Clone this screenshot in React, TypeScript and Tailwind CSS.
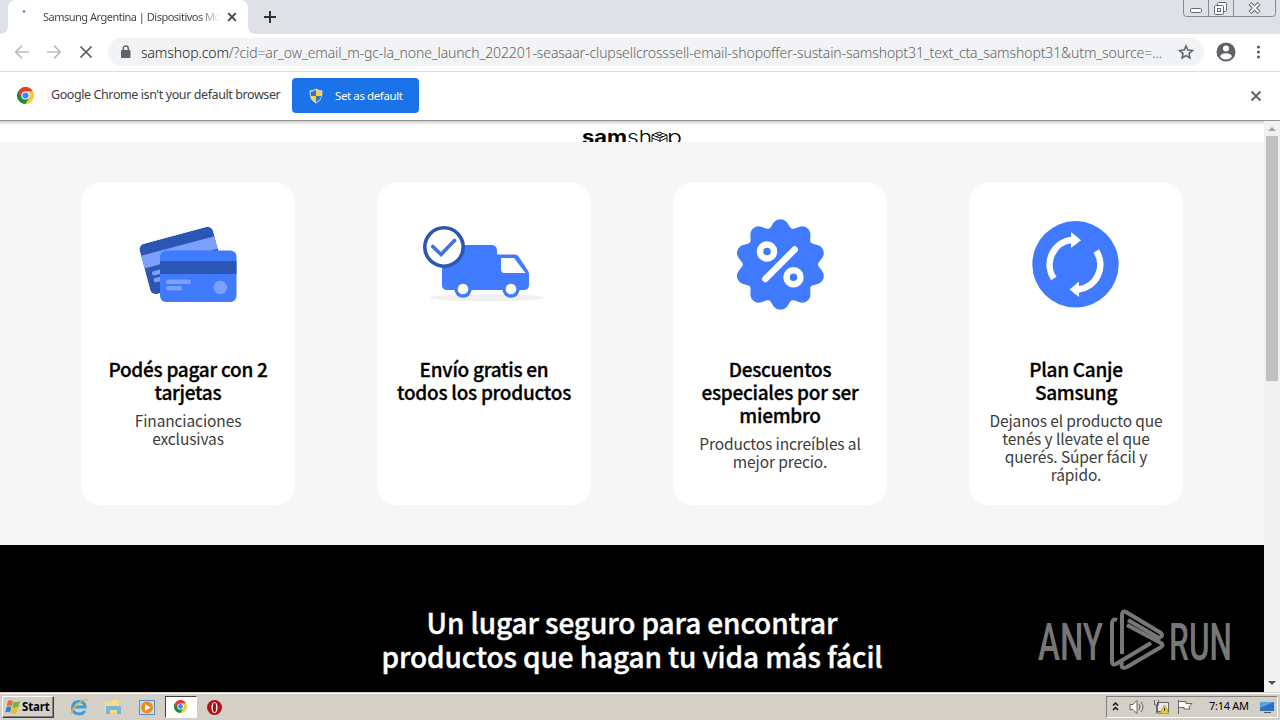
import React from 'react';

interface Feature {
  id: string;
  icon: React.ReactNode;
  title: string[];
  text: string[];
}

const CardsIcon = () => (
  <svg width="214" height="120" viewBox="0 0 214 120">
    <clipPath id="backCard"><rect width="76" height="52" rx="6" /></clipPath>
    <g transform="translate(57.2 63.2) rotate(-15)">
      <g clipPath="url(#backCard)">
        <rect width="76" height="52" fill="#2b56b4" />
        <rect y="11" width="76" height="13" fill="#7da0ff" />
        <rect x="6" y="29" width="24" height="4.500" rx="2" fill="#7da0ff" />
        <rect x="6" y="36" width="16" height="4.500" rx="2" fill="#7da0ff" />
      </g>
    </g>
    <rect x="79" y="68.500" width="76.500" height="51.500" rx="6" fill="#407bff" />
    <rect x="79" y="79" width="76.500" height="13" fill="#2b56b4" />
    <rect x="85" y="97.500" width="25" height="4.500" rx="2" fill="#7da0ff" />
    <rect x="85" y="104" width="16" height="4.500" rx="2" fill="#7da0ff" />
    <circle cx="139.3" cy="105.5" r="6.8" fill="#7da0ff" />
  </svg>
);

const TruckIcon = () => (
  <svg width="214" height="120" viewBox="0 0 214 120">
    <ellipse cx="110" cy="115.7" rx="57" ry="3.6" fill="#f0f0f0" />
    <path d="M65 63H115a5 5 0 0 1 5 5V72.5H138q2 0 3.2 1.6L150.5 88q1.5 2 1.5 4.5V103q0 5-5 5H70q-5 0-5-5Z" fill="#407bff" />
    <path d="M124 76H137L148.500 91H127.500Q124 91 124 87.500Z" fill="#fff" />
    <circle cx="86" cy="107" r="8.700" fill="#407bff" />
    <circle cx="86" cy="107" r="5.300" fill="#fff" />
    <circle cx="134" cy="107" r="8.700" fill="#407bff" />
    <circle cx="134" cy="107" r="5.300" fill="#fff" />
    <circle cx="67" cy="65" r="19.200" fill="#fff" stroke="#2b56b4" strokeWidth="3.600" />
    <path d="M55.800 64.500L64 72.500L77.500 58.500" fill="none" stroke="#4470e6" strokeWidth="3.600" strokeLinecap="round" />
  </svg>
);

// ten soft lobes around the centre of the badge
const badgePoints = Array.from({ length: 240 }, (_, i) => {
  const angle = (i / 240) * Math.PI * 2;
  const wave = Math.cos(angle * 10);
  const r = 41.9 + 3.8 * wave - 0.5 * Math.cos(angle * 20);
  return `${(107.4 + r * Math.sin(angle)).toFixed(2)},${(82.5 - r * Math.cos(angle)).toFixed(2)}`;
}).join(' ');

const PercentIcon = () => (
  <svg width="214" height="130" viewBox="0 0 214 130">
    <polygon points={badgePoints} fill="#407bff" />
    <circle cx="94" cy="69.500" r="7" fill="none" stroke="#fff" strokeWidth="6.500" />
    <circle cx="120.500" cy="95.200" r="7" fill="none" stroke="#fff" strokeWidth="6.500" />
    <path d="M92.300 97L121.700 67.500" stroke="#fff" strokeWidth="6.500" strokeLinecap="round" />
  </svg>
);

const SwapIcon = () => (
  <svg width="214" height="130" viewBox="0 0 214 130">
    <circle cx="106.500" cy="82.300" r="43.200" fill="#407bff" />
    <g fill="none" stroke="#fff" strokeWidth="6.500">
      <path d="M84.800 96.500A25 25 0 0 1 103 57.800" />
      <path d="M127.200 69A25 25 0 0 1 109.500 107.500" />
    </g>
    <path d="M102 50L112 58.300L102 66Z" fill="#fff" />
    <path d="M110 99.500L100.500 107.500L110 115Z" fill="#fff" />
  </svg>
);

const features: Feature[] = [
  { id: 'cards', icon: <CardsIcon />, title: ['Podés pagar con 2', 'tarjetas'], text: ['Financiaciones', 'exclusivas'] },
  { id: 'shipping', icon: <TruckIcon />, title: ['Envío gratis en', 'todos los productos'], text: [] },
  { id: 'discount', icon: <PercentIcon />, title: ['Descuentos', 'especiales por ser', 'miembro'], text: ['Productos increíbles al', 'mejor precio.'] },
  {
    id: 'swap',
    icon: <SwapIcon />,
    title: ['Plan Canje', 'Samsung'],
    text: ['Dejanos el producto que', 'tenés y llevate el que', 'querés. Súper fácil y', 'rápido.'],
  },
];

const ChromeLogo = ({ size }: { size: number }) => (
  <svg width={size} height={size} viewBox="0 0 48 48" className="shrink-0">
    <path d="M24 24L3.200 12A24 24 0 0 1 44.800 12Z" fill="#e33b2e" />
    <path d="M24 24L44.800 12A24 24 0 0 1 24 48Z" fill="#fcc934" />
    <path d="M24 24L24 48A24 24 0 0 1 3.200 12Z" fill="#1e8e3e" />
    <path d="M24 12H44.800L34.400 30Z" fill="#fcc934" />
    <path d="M34.400 30L24 48L13.600 30Z" fill="#1e8e3e" />
    <path d="M3.200 12L13.600 30L24 12Z" fill="#e33b2e" />
    <circle cx="24" cy="24" r="11.500" fill="#fff" />
    <circle cx="24" cy="24" r="8.800" fill="#4285f4" />
  </svg>
);

const ShieldIcon = () => (
  <svg width="14" height="16" viewBox="0 0 14 16">
    <path d="M7 .5Q10 2.500 13.500 2.500Q14 12 7 15.500Q0 12 .5 2.500Q4 2.500 7 .5Z" fill="#d5dbe4" />
    <path d="M7 2Q4 3.600 1.700 3.700L1.700 8H7Z" fill="#3273c9" />
    <path d="M7 2Q10 3.600 12.300 3.700L12.300 8H7Z" fill="#f8d436" />
    <path d="M7 8H1.700Q2.500 12 7 14.200Z" fill="#f8d436" />
    <path d="M7 8H12.300Q11.500 12 7 14.200Z" fill="#3273c9" />
  </svg>
);

const TabStrip = () => (
  <div className="flex h-[34px] bg-[#dee1e6]">
    <svg width="8" height="34" className="shrink-0"><path d="M8 26V34H0Q8 34 8 26Z" fill="#fff" /></svg>
    <div className="flex h-full w-[240px] items-center rounded-t-[8px] bg-white">
      <svg width="35" height="34"><circle cx="16" cy="11.500" r="1.200" fill="#3f7bd9" /></svg>
      <div className="w-[177px] overflow-hidden bg-linear-to-r from-[#3c4043] from-88% to-transparent bg-clip-text font-['Noto_Sans'] text-[11px] tracking-[-0.5px] whitespace-nowrap text-transparent">
        Samsung Argentina | Dispositivos Móviles
      </div>
      <svg width="18" height="34" className="ml-[3px]"><path d="M5.200 13.200L12.800 20.800M12.800 13.200L5.200 20.800" stroke="#3c4043" strokeWidth="1.800" /></svg>
    </div>
    <svg width="44" height="34"><path d="M0 26Q0 34 8 34H0Z" fill="#fff" /><path d="M22 11V23M16 17H28" stroke="#303336" strokeWidth="2" /></svg>
    <svg width="94" height="18" viewBox="0 0 94 18" className="mr-[3px] ml-auto" fill="none">
      <path d="M.5 0V13.500Q.5 16.500 3.500 16.500H89.500Q92.500 16.500 92.500 13.500V0M25.500 0V16M50.500 0V16" stroke="#858990" />
      <rect x="7.500" y="8.500" width="11" height="4" rx="1" fill="#fff" stroke="#666a70" />
      <rect x="34.500" y="2.500" width="9" height="9" rx="1" fill="#fff" stroke="#666a70" />
      <rect x="31.500" y="5.500" width="9" height="9" rx="1" fill="#fff" stroke="#666a70" />
      <rect x="34.500" y="8.500" width="3" height="3" stroke="#666a70" />
      <path d="M67 3.500L76 12.500M76 3.500L67 12.500" stroke="#666a70" strokeWidth="4" />
      <path d="M67.500 4L75.500 12M75.500 4L67.500 12" stroke="#fff" strokeWidth="2" />
    </svg>
  </div>
);

const Toolbar = () => (
  <div className="flex h-[38px] items-center border-b border-[#d9dbde] bg-white pb-px">
    <svg width="108" height="36" viewBox="0 0 108 36" fill="none" strokeWidth="1.700">
      <path d="M29 18H16M22 11.700L15.700 18L22 24.300" stroke="#babcbe" />
      <path d="M47 18H60M54 11.700L60.300 18L54 24.300" stroke="#babcbe" />
      <path d="M80.500 12.500L91.500 23.500M91.500 12.500L80.500 23.500" stroke="#55585c" />
    </svg>
    <div className="flex h-7 w-[1096px] items-center rounded-full bg-[#f1f3f4] pr-[10px] pl-[13px]">
      <svg width="10" height="14" viewBox="0 0 10 14">
        <rect y="5" width="9.500" height="8" rx="1" fill="#5f6368" />
        <path d="M2.200 5.500V3.500Q2.200 1 4.750 1T7.300 3.500V5.500" fill="none" stroke="#5f6368" strokeWidth="1.400" />
      </svg>
      <div className="ml-[10px] w-[1030px] font-['Noto_Sans'] text-[14px] font-light tracking-[-0.105px] whitespace-nowrap text-[#5f6368]">
        <span className="text-[#202124]">samshop.com</span>
        /?cid=ar_ow_email_m-gc-la_none_launch_202201-seasaar-clupsellcrosssell-email-shopoffer-sustain-samshopt31_text_cta_samshopt31&amp;utm_source=...
      </div>
      <svg width="16" height="16" viewBox="0 0 24 24" className="ml-auto shrink-0" fill="none" stroke="#5f6368" strokeWidth="2.300">
        <path d="M12 3L14.700 9.200L21.500 9.900L16.400 14.400L17.900 21L12 17.500L6.100 21L7.600 14.400L2.500 9.900L9.300 9.200Z" />
      </svg>
    </div>
    <svg width="76" height="36" viewBox="0 0 76 36">
      <circle cx="22" cy="18" r="9.500" fill="#5f6368" />
      <circle cx="22" cy="14.500" r="3" fill="#fff" />
      <path d="M16 22.200Q17.500 19.300 22 19.300T28 22.200Q26 25.400 22 25.400T16 22.200Z" fill="#fff" />
      <g fill="#5f6368"><circle cx="54.500" cy="13" r="1.600" /><circle cx="54.500" cy="18" r="1.600" /><circle cx="54.500" cy="23" r="1.600" /></g>
    </svg>
  </div>
);

const InfoBar = () => (
  <div className="flex h-[49px] items-center border-b border-[#929292] bg-white pb-px pl-[17px]">
    <ChromeLogo size={17} />
    <div className="ml-[17px] w-[241px] font-['Noto_Sans'] text-[12.5px] tracking-[-0.41px] whitespace-nowrap text-[#3c4043]">Google Chrome isn't your default browser</div>
    <button className="flex h-[35px] w-[127px] items-center rounded-[4px] bg-[#1a73e8] pl-[17px]">
      <ShieldIcon />
      <span className="ml-3 font-['Noto_Sans'] text-[11.5px] tracking-[-0.4px] whitespace-nowrap text-white">Set as default</span>
    </button>
    <svg width="12" height="12" className="mr-[18px] ml-auto"><path d="M1.500 1.500L10.500 10.500M10.500 1.500L1.500 10.500" stroke="#5f6368" strokeWidth="1.900" /></svg>
  </div>
);

const SamshopLogo = () => (
  <svg width="100" height="20" viewBox="0 0 100 20" className="mx-auto block overflow-hidden" fontFamily="Inter">
    <text x="0" y="22" fontSize="19" fontWeight="700" textLength="45" lengthAdjust="spacingAndGlyphs">sam</text>
    <text x="45" y="22" fontSize="19" fontWeight="300" textLength="25" lengthAdjust="spacingAndGlyphs">sh</text>
    <path d="M70 13L77 10L85 13L78 16ZM70 13V20M85 13V20M78 16V23M74 11.500L81 15M81 11.500L74 15M70 16L78 19L85 16" fill="none" stroke="#111" />
    <text x="85" y="22" fontSize="19" fontWeight="300" textLength="15" lengthAdjust="spacingAndGlyphs">p</text>
  </svg>
);

const FeatureCard: React.FC<{ feature: Feature }> = ({ feature }) => (
  <div className="h-[323px] w-[214px] rounded-[20px] bg-white text-center font-['Noto_Sans_CJK_SC',sans-serif] whitespace-nowrap">
    <div className="h-[175px]">{feature.icon}</div>
    <h3 className="text-[19px] leading-[23px] font-medium tracking-[-0.27px] text-black [-webkit-text-stroke:0.3px_black]">
      {feature.title.map((line) => <span key={line} className="block">{line}</span>)}
    </h3>
    <p className="mt-2 text-[15.5px] leading-[18px] font-normal tracking-[-0.12px] text-[#3c3c3c]">
      {feature.text.map((line) => <span key={line} className="block">{line}</span>)}
    </p>
  </div>
);

const Watermark = () => (
  <svg width="194" height="64" viewBox="0 0 194 64" className="absolute top-[63px] left-[1038px]" fontFamily="Roboto" fill="#777">
    <text x="0" y="51.500" fontSize="52" fontWeight="500" textLength="65" lengthAdjust="spacingAndGlyphs">ANY</text>
    <text x="131" y="51.500" fontSize="52" fontWeight="500" textLength="63" lengthAdjust="spacingAndGlyphs">RUN</text>
    <g fill="none" stroke="#777" strokeWidth="4" strokeLinejoin="round">
      <path d="M79 12Q74 10 74 16V53Q74 58 78 56L113 35" />
      <path d="M84 46V7Q84 2 88 4L123 25Q126 28 121 30L90 12" />
      <path d="M84 54Q82 62 89 59L123 39Q126 37 123 35L89 17" />
    </g>
  </svg>
);

const ScrollBar = () => (
  <div className="flex w-4 flex-col items-center bg-[#f1f1f1]">
    <svg width="16" height="15"><path d="M4 10L8 6L12 10Z" fill="#a3a3a3" /></svg>
    <div className="h-[245px] w-3 bg-[#c1c1c1]" />
    <svg width="16" height="16" className="mt-auto"><path d="M4 5L8 9L12 5Z" fill="#505050" /></svg>
  </div>
);

const Taskbar = () => (
  <div className="flex h-7 items-center border-t border-[#d4d0c8] bg-[#d4d0c8] shadow-[inset_0_1px_0_#fff]">
    <div className="mt-px ml-[2px] flex h-[22px] w-[52px] items-center border border-t-white border-r-[#404040] border-b-[#404040] border-l-white pl-[2px] shadow-[inset_-1px_-1px_0_#808080]">
      <svg width="16" height="16" viewBox="0 0 16 16" className="shrink-0">
        <path d="M3 2Q5 .5 7.800 2L6.500 7.300Q4.500 5.800 1.700 7.300Z" fill="#ee6830" />
        <path d="M8.500 2.500Q11 4 15 2L13.300 8Q10 9.500 7.200 8Z" fill="#75b53c" />
        <path d="M1.500 8.200Q4 6.700 6.300 8.200L5 13.500Q3 12 .2 13.500Z" fill="#397cc7" />
        <path d="M7 8.800Q10 10.300 13 8.800L11.500 14Q8.500 15.500 5.700 14Z" fill="#f5bd29" />
      </svg>
      <span className="ml-px font-['Noto_Sans'] text-[11.5px] font-bold tracking-[-0.15px] text-black">Start</span>
    </div>
    <svg width="112" height="26" viewBox="0 0 112 26" className="shrink-0">
      <path d="M19 13H31Q31 7.500 25 7.500T18.500 13.500T25 20Q29 20 31 17" fill="none" stroke="#3b9fdb" strokeWidth="3" />
      <path d="M17.500 20Q17 15 25 9T33 7" fill="none" stroke="#e8b93a" strokeWidth="1.500" />
      <path d="M51 8H57L58 6H65V19H51Z" fill="#f3dd85" />
      <path d="M52 12H67V20H63V16H56V20H52Z" fill="#76b6dc" />
      <rect x="85.500" y="6.500" width="15" height="14" fill="#c6e1f4" stroke="#5b91be" />
      <circle cx="93" cy="13.500" r="6" fill="#f08a1c" />
      <path d="M91 10L96.500 13.500L91 17Z" fill="#fff" />
    </svg>
    <div className="-ml-px flex h-[22px] w-[32px] items-center justify-center border border-t-[#404040] border-r-white border-b-white border-l-[#404040] bg-white pr-[2px]">
      <ChromeLogo size={13} />
    </div>
    <svg width="34" height="26" viewBox="0 0 34 26">
      <circle cx="17.500" cy="13.500" r="7.500" fill="#b31318" />
      <ellipse cx="17.500" cy="13.500" rx="3" ry="5.500" fill="#fff" />
      <ellipse cx="17.500" cy="13.500" rx="1.700" ry="4.800" fill="#a31216" />
    </svg>
    <div className="mr-[2px] ml-auto flex h-[22px] w-[172px] items-center border border-t-[#808080] border-r-white border-b-white border-l-[#808080]">
      <svg width="90" height="20" viewBox="0 0 90 20" fill="none" stroke="#666">
        <path d="M6 8.500L8.500 6L11 8.500M6 13L8.500 10.500L11 13" stroke="#111" strokeWidth="1.500" />
        <path d="M23 7.500H26L30 3.500V16.500L26 12.500H23Z" fill="#fff" />
        <path d="M32 7Q34 10 32 13M34 5Q38 10 34 15" />
        <rect x="50.500" y="5.500" width="11" height="9" fill="#e8e8e8" />
        <path d="M47.500 3V8H51.500V3M49.500 8V16H53" />
        <path d="M57.500 8L62 16.500H53Z" fill="#f6cf25" stroke="#c99f13" />
        <path d="M57.500 11V14" stroke="#333" />
        <path d="M71.500 3V17M72 4.500H79V6.500H85L82 9.500L83 12H77V10.500H72" fill="#fff" />
      </svg>
      <span className="ml-[12px] w-[45px] font-['Noto_Sans'] text-[11px] tracking-[-0.3px] whitespace-nowrap text-black">7:14 AM</span>
      <svg width="16" height="14" viewBox="0 0 16 14" className="ml-[5px]">
        <rect x=".5" y="1.500" width="15" height="10" fill="#2d70bb" stroke="#b8cfe6" />
        <path d="M1 2H15L1 8Z" fill="#5ea0df" />
        <path d="M5 12.500H12" stroke="#555" />
      </svg>
    </div>
  </div>
);

export default function App() {
  return (
    <div className="flex h-[720px] w-[1280px] flex-col overflow-hidden bg-white">
      <TabStrip />
      <Toolbar />
      <InfoBar />
      <div className="flex min-h-0 flex-1 bg-white">
        <div className="flex w-[1264px] flex-col">
          <header className="h-[21px] bg-linear-to-b from-[#d0d0d0] to-white to-20% pt-px">
            <SamshopLogo />
          </header>
          <section className="flex h-[403px] gap-[82px] bg-[#f6f6f6] pt-10 pl-[81px]">
            {features.map((f) => <FeatureCard key={f.id} feature={f} />)}
          </section>
          <section className="relative flex-1 bg-black pt-[60px]">
            <h2 className="text-center font-['Noto_Sans_CJK_SC',sans-serif] text-[28px] leading-[34px] font-medium tracking-[-0.11px] whitespace-nowrap text-white [-webkit-text-stroke:0.4px_white]">
              Un lugar seguro para encontrar
              <br />
              productos que hagan tu vida más fácil
            </h2>
            <Watermark />
          </section>
        </div>
        <ScrollBar />
      </div>
      <Taskbar />
    </div>
  );
}
